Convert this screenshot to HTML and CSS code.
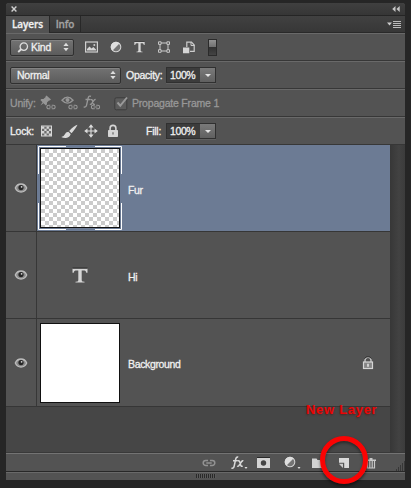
FILE: index.html
```html
<!DOCTYPE html>
<html lang="en">
<head>
<meta charset="utf-8">
<title>Layers</title>
<link rel="stylesheet" href="styles.css">
</head>
<body>
<svg class="defs" width="0" height="0" aria-hidden="true">
  <defs>
    <symbol id="eye" viewBox="0 0 14 12"><path d="M1.300 6Q3 2 7 2T12.700 6Q11 10 7 10T1.300 6Z" fill="#8a8a8a" stroke="#bcbcbc" stroke-width="1.300"/><circle cx="7" cy="5.600" r="2.600" fill="#262626"/><circle cx="7.600" cy="4.800" r=".9" fill="#d5d5d5"/></symbol>
    <symbol id="link" viewBox="0 0 14 8"><path d="M6 1.500H3.700a2.500 2.500 0 0 0 0 5H6M8 1.500h2.300a2.500 2.500 0 0 1 0 5H8M4.300 4h5.400" fill="none" stroke="currentColor" stroke-width="1.500"/></symbol>
    <symbol id="half" viewBox="0 0 12 12"><circle cx="6" cy="6" r="4.800" fill="#747474" stroke="#d2d2d2" stroke-width="1.100"/><path d="M2.300 9.700A5.200 5.200 0 0 1 9.700 2.300Z" fill="#dedede"/></symbol>
    <symbol id="tee" viewBox="0 0 16 16"><path d="M.5 1h15v4.300h-1.200Q13.800 3 12.500 3H9.700v10q0 1.200 2.800 1.200V15h-9v-.8q2.800 0 2.800-1.200V3H3.500Q2.200 3 1.700 5.300H.5Z" fill="#d6d6d6"/><path d="M.5.6h15" stroke="#222" stroke-width=".9"/></symbol>
    <symbol id="arrows" viewBox="0 0 6 10"><path d="M.4 4L3 .8 5.600 4ZM.4 6L3 9.200 5.600 6Z" fill="#ddd"/></symbol>
  </defs>
</svg>
<main class="panel">
  <header class="titlebar">
    <svg width="6" height="6" viewBox="0 0 6 6"><path d="M.6.6l4.800 4.800M5.400.6L.6 5.400" stroke="#d0d0d0" stroke-width="1.400"/></svg>
    <svg width="8" height="6" viewBox="0 0 8 6"><path d="M3.500 0v6L.2 3ZM7.700 0v6L4.400 3Z" fill="#c5c5c5"/></svg>
  </header>
  <nav class="tabs">
    <span class="tab active">Layers</span><span class="tab">Info</span>
    <svg class="menu" width="14" height="9" viewBox="0 0 14 9"><path d="M0 2.500h5L2.500 5.500Z" fill="#ccc"/><path d="M6 1.500h8M6 3.500h8M6 5.500h8M6 7.500h8" stroke="#bbb"/></svg>
  </nav>

  <section class="bar filter">
    <div class="select kind">
      <svg width="12" height="11" viewBox="0 0 12 11"><circle cx="6.800" cy="4.600" r="3.700" fill="none" stroke="#ddd" stroke-width="1.300"/><path d="M4.400 7L1.200 10" stroke="#ddd" stroke-width="1.800"/></svg>
      <span>Kind</span>
      <svg class="arrows" width="6" height="10"><use href="#arrows"/></svg>
    </div>
    <svg width="13" height="12" viewBox="0 0 13 12"><rect x=".6" y="1" width="11.800" height="10" fill="#555" stroke="#d0d0d0" stroke-width="1.200"/><path d="M2 9.500V8l2.500-2.500 2 2L8.300 6 11 8.500v1Z" fill="#d5d5d5"/><circle cx="9.300" cy="4" r="1" fill="#ccc"/></svg>
    <svg width="12" height="12"><use href="#half"/></svg>
    <svg width="11" height="12" viewBox="0 0 16 16" preserveAspectRatio="none"><use href="#tee" width="16" height="16"/></svg>
    <svg width="12" height="12" viewBox="0 0 12 12"><path d="M2 2h8v8H2Z" fill="none" stroke="#ccc"/><path d="M.5.8h2.600v2.600H.5ZM8.900.8h2.600v2.600H8.900ZM.5 8.700h2.600v2.600H.5ZM8.900 8.700h2.600v2.600H8.900Z" fill="#555" stroke="#d0d0d0" stroke-width=".9"/></svg>
    <svg width="12" height="13" viewBox="0 0 12 13"><path d="M3.800 6V1.200h4.700l2.700 2.900v6.300H7" fill="none" stroke="#ccc" stroke-width="1.200"/><path d="M8 1v3.500h3.500" fill="none" stroke="#ccc"/><path d="M0 6.500h6.300v5.800H0Z" fill="#d5d5d5"/></svg>
    <i class="toggle"></i>
  </section>

  <section class="bar blend">
    <div class="select mode"><span>Normal</span><svg class="arrows" width="6" height="10"><use href="#arrows"/></svg></div>
    <span class="lbl">Opacity:</span>
    <div class="field"><span>100%</span><b></b></div>
  </section>

  <section class="bar unify">
    <span class="lbl">Unify:</span>
    <svg width="16" height="16" viewBox="0 0 16 16"><path d="M6.500.5l4.500 4-1.200 1-.8-.1L7 7.600l-.1 2-1.100 1L3.500 8.300.4 10.400 2.500 7.200.4 5l1-1 2 .1L5.700 2l-.1-.8Z" fill="#969696"/><svg x="6" y="9" width="10" height="6"><use href="#link"/></svg></svg>
    <svg width="17" height="16" viewBox="0 0 17 16"><path d="M1 5.200Q6.500-1 12 5.200 6.500 11 1 5.200Z" fill="none" stroke="#969696" stroke-width="1.400"/><circle cx="6.500" cy="5" r="2" fill="#969696"/><svg x="7" y="9" width="10" height="6"><use href="#link"/></svg></svg>
    <svg width="18" height="16" viewBox="0 0 18 16"><path d="M8 1.300Q5.700.2 5 3.600L3.600 10Q3 12.700.7 11.900M2.500 4.500h4.700M7.500 4.700q1.500-.6 2 1l.8 3q.3 1 1.500.4M12.600 4.600q-1-.5-2 1.200L8.600 8.700q-.9 1-1.700.4" fill="none" stroke="#989898" stroke-width="1.300"/><svg x="7.500" y="9" width="10" height="6"><use href="#link"/></svg></svg>
    <svg width="15" height="15" viewBox="0 0 15 15"><rect x=".8" y="1.800" width="12" height="12" rx="1.500" fill="#5c5c5c" stroke="#3d3d3d"/><path d="M3.500 6.500l2.800 3.200L13 1.500" fill="none" stroke="#999" stroke-width="1.900"/></svg>
    <span class="lbl">Propagate Frame 1</span>
  </section>

  <section class="bar lock">
    <span class="lbl">Lock:</span>
    <svg width="11" height="12" viewBox="0 0 11 12"><rect x=".5" y="1" width="10" height="10" fill="#6c6c6c" stroke="#d8d8d8"/><path d="M1 1.500h2.300v2.300H1ZM5.600 1.500h2.300v2.300H5.600ZM3.300 3.800h2.300v2.300H3.300ZM7.900 3.800h2.300v2.300H7.900ZM1 6.100h2.300v2.300H1ZM5.600 6.100h2.300v2.300H5.600ZM3.300 8.400h2.300v2.300H3.300ZM7.900 8.400h2.300v2.300H7.900Z" fill="#d6d6d6"/></svg>
    <svg width="17" height="15" viewBox="0 0 17 15"><path d="M16.500.8Q13 1.800 8.200 7l2.400 2.300Q15 4 16.500.8ZM7.300 7.800l2.400 2.300Q8.800 13.700 5 13.900 2 14 .3 12.900q2.800-.2 3.600-2.600.7-2.200 3.400-2.500Z" fill="#dadada"/></svg>
    <svg width="14" height="14" viewBox="0 0 14 14"><path d="M7 2v10M2 7h10" stroke="#ddd" stroke-width="1.100"/><path d="M7 .2l2.600 3.300H4.400ZM7 13.800l2.600-3.300H4.400ZM.2 7l3.300-2.600v5.200ZM13.800 7l-3.300-2.600v5.200Z" fill="#ddd"/></svg>
    <svg width="12" height="14" viewBox="0 0 12 14"><path d="M3.100 7V4.300a2.900 2.900 0 0 1 5.800 0V7" fill="none" stroke="#d5d5d5" stroke-width="1.600"/><rect x="1" y="6" width="10" height="7" rx=".8" fill="#d6d6d6"/><path d="M5.400 8.200h1.200v2.300H5.400Z" fill="#666"/></svg>
    <span class="lbl">Fill:</span>
    <div class="field"><span>100%</span><b></b></div>
  </section>

  <section class="body">
    <div class="list">
      <div class="layer selected">
        <div class="vis"><svg width="14" height="12"><use href="#eye"/></svg></div>
        <div class="thumbcell"><svg width="84" height="84" viewBox="0 0 84 84"><defs><pattern id="chk" x="3" y="3" width="8" height="8" patternUnits="userSpaceOnUse"><path d="M0 0h8v8H0Z" fill="#fff"/><path d="M4 0h4v4H4ZM0 4h4v4H0Z" fill="#cbcbcb"/></pattern></defs><path d="M28 .5H.5V28M57 .5h26.500V28M.5 57v26.500H28M83.500 57v26.500H57" fill="none" stroke="#fff"/><rect x="2.500" y="2.500" width="79" height="79" fill="url(#chk)" stroke="#111"/></svg></div>
        <span class="name">Fur</span>
      </div>
      <div class="layer">
        <div class="vis"><svg width="14" height="12"><use href="#eye"/></svg></div>
        <div class="thumbcell type"><svg width="16" height="17"><use href="#tee"/></svg></div>
        <span class="name">Hi</span>
      </div>
      <div class="layer last">
        <div class="vis"><svg width="14" height="12"><use href="#eye"/></svg></div>
        <div class="thumbcell"><i class="white"></i></div>
        <span class="name">Background</span>
        <svg class="locked" width="12" height="14" viewBox="0 0 12 14"><path d="M3 7V4.300a3 3 0 0 1 6 0V7" fill="none" stroke="#cfcfcf" stroke-width="1.300"/><path d="M2.500 2.500Q6-1 9.500 2.500" fill="none" stroke="#222"/><rect x="1.500" y="6" width="9" height="6.500" fill="#858585" stroke="#d5d5d5" stroke-width="1.200"/><path d="M5.300 7.800h1.400v3H5.300Z" fill="#eee"/></svg>
      </div>
    </div>
    <div class="scroll"></div>
  </section>

  <footer class="tools">
    <svg class="dim" width="14" height="8"><use href="#link"/></svg>
    <svg width="17" height="14" viewBox="0 0 17 14"><path d="M7.200 1.200Q5.300.3 4.600 3.500L3.200 10Q2.600 12.900.5 12M2 4.800h4.600M6.800 5q1.500-.7 2 1l1 3.600q.4 1.200 1.800.3M12.300 5q-1-.6-2 1.200L8 9.500q-.9 1.200-1.900.5" fill="none" stroke="#d9d9d9" stroke-width="1.500"/><path d="M13.500 11h3L15 13Z" fill="#ddd"/></svg>
    <svg width="13" height="12" viewBox="0 0 13 12"><path d="M0 1h13v10H0Z" fill="#d4d4d4"/><path d="M0 .5h13" stroke="#292929"/><circle cx="6.500" cy="6" r="2.700" fill="#454545"/></svg>
    <svg width="17" height="14" viewBox="0 0 17 14"><use href="#half" width="12" height="12"/><path d="M13.500 11h3L15 13Z" fill="#ddd"/></svg>
    <svg width="13" height="12" viewBox="0 0 13 12"><path d="M1 1.500h4.500l1 1.500H12v8H1Z" fill="#d2d2d2"/></svg>
    <svg width="12" height="12" viewBox="0 0 12 12"><path d="M1 1h10v10H6.200V5.800H1Z" fill="#dadada"/><path d="M.8 6.800H5V11Z" fill="#ccc"/></svg>
    <svg width="10" height="12" viewBox="0 0 10 12"><path d="M3.500 1h3v1.500H10V4H0V2.500h3.500Z" fill="#c9c9c9"/><path d="M1.500 4v7h7V4M3.800 4v7M6.200 4v7" fill="none" stroke="#c9c9c9" stroke-width="1.200"/></svg>
    <svg class="sizer" width="10" height="10" viewBox="0 0 10 10"><path d="M8 1h1M6 3h1M8 3h1M4 5h1M6 5h1M8 5h1M2 7h1M4 7h1M6 7h1M8 7h1M0 9h1M2 9h1M4 9h1M6 9h1M8 9h1" stroke="#1d1d1d"/></svg>
  </footer>
  <div class="grip"><i></i></div>
</main>
<div class="callout">New Layer</div>
<div class="ring"></div>
</body>
</html>
```
FILE: styles.css
```css
* { box-sizing: border-box; }
body {
  margin: 0;
  width: 411px;
  height: 488px;
  overflow: hidden;
  position: relative;
  padding: 3px 6px 8px;
  background: #262626;
  color: #f0f0f0;
  font: 10.5px/14px "Liberation Sans", Arial, sans-serif;
  letter-spacing: -0.25px;
  -webkit-text-stroke: 0.3px currentColor;
  white-space: nowrap;
}
svg { display: block; flex: none; }
.defs { position: absolute; }
.panel {
  width: 399px;
  height: 477px;
  display: flex;
  flex-direction: column;
  background: #535353;
  border-radius: 3px 3px 0 0;
  overflow: hidden;
}
.titlebar {
  height: 13px;
  flex: none;
  display: flex;
  justify-content: space-between;
  align-items: center;
  padding: 0 5px;
  background: linear-gradient(#404040, #363636);
  border-bottom: 1px solid #252525;
}
.tabs {
  height: 17px;
  flex: none;
  display: flex;
  background: linear-gradient(#414141, #373737);
  border-bottom: 1px solid #292929;
  font: 600 10px/17px "Open Sans", sans-serif;
  letter-spacing: -0.1px;
}
.tab {
  width: 31px;
  text-align: center;
  color: #a2a2a2;
  border-right: 1px solid #282828;
}
.tab.active {
  width: 44px;
  height: 17px;
  color: #f0f0f0;
  background: #535353;
}
.menu { margin: 4px 4px 0 auto; }
.bar {
  height: 28px;
  flex: none;
  display: grid;
  align-items: center;
  border-top: 1px solid #696969;
  border-bottom: 1px solid #373737;
  padding-left: 4px;
}
.filter { grid-template-columns: 75px 25px 24px 24px 25px 25px 13px; }
.blend { grid-template-columns: 116px 40px 52px; }
.unify {
  grid-template-columns: 30px 21px 22px 31px 18px 100px;
  color: #989898;
}
.unify .lbl { letter-spacing: -0.2px; }
.lock { grid-template-columns: 31px 20px 23px 23px 39px 20px 52px; }
.select {
  height: 17px;
  display: flex;
  align-items: center;
  border: 1px solid #303030;
  border-radius: 2px;
  background: linear-gradient(#727272, #5c5c5c);
  box-shadow: inset 0 1px #838383, 0 1px #606060;
  padding: 0 4px 0 6px;
}
.kind { width: 64px; gap: 2px; }
.mode { width: 111px; }
.arrows { margin-left: auto; }
.toggle {
  width: 9px;
  height: 17px;
  border: 1px solid #2b2b2b;
  background: linear-gradient(#929292, #707070 47%, #303030 47%, #444);
}
.field {
  width: 50px;
  height: 16px;
  display: flex;
  border: 1px solid #303030;
  background: #3c3c3c;
  box-shadow: 0 1px #606060;
}
.field span { width: 33px; padding-left: 3px; letter-spacing: -0.4px; }
.field b {
  flex: 1;
  display: grid;
  place-items: center;
  background: linear-gradient(#7a7a7a, #606060);
}
.field b::after {
  content: "";
  border: 3px solid transparent;
  border-top: 3px solid #e5e5e5;
  border-bottom: 0;
}
.body {
  height: 308px;
  flex: none;
  display: flex;
  background: #464646;
  border-bottom: 1px solid #393939;
}
.list { flex: 1; }
.scroll {
  width: 15px;
  background: linear-gradient(90deg, #373737, #424242 60%, #3c3c3c);
}
.layer {
  height: 87px;
  display: flex;
  align-items: center;
  border-bottom: 1px solid #363636;
  background: #535353;
}
.layer.last { height: 88px; }
.vis {
  width: 31px;
  height: 100%;
  display: grid;
  place-items: center;
  border-right: 1px solid #373737;
  background: #535353;
}
.thumbcell {
  width: 91px;
  height: 86px;
  display: grid;
  place-items: center start;
  padding-left: 1px;
}
.layer.selected { background: #6c7b94; }
.type { padding-left: 35px; }
.white {
  width: 80px;
  height: 80px;
  margin-left: 2px;
  border: 1px solid #111;
  background: #fff;
}
.name { padding-top: 3px; letter-spacing: -0.35px; }
.locked { margin: 0 16px 0 auto; }
.tools {
  height: 19px;
  flex: none;
  display: grid;
  grid-template-columns: 29px 26px 27px 27px 27px 28px 30px 10px;
  align-items: center;
  padding-left: 196px;
  border-top: 1px solid #737373;
  border-bottom: 1px solid #282828;
}
.dim { color: #929292; }
.sizer { align-self: end; }
.grip {
  flex: 1;
  display: flex;
  justify-content: center;
  border-top: 1px solid #696969;
}
.grip i {
  width: 20px;
  height: 4px;
  margin-top: 1px;
  background: repeating-linear-gradient(90deg, #292929 0 1px, #5a5a5a 1px 2px);
}
.callout {
  position: absolute;
  left: 306px;
  top: 402px;
  color: #ea0606;
  font: bold 13px/16px "Liberation Sans", Arial, sans-serif;
  letter-spacing: 0.7px;
  -webkit-text-stroke: 0;
  text-shadow: 0 1px 2px #5008;
}
.ring {
  position: absolute;
  left: 320px;
  top: 436px;
  width: 48px;
  height: 48px;
  border: 5px solid #fb0303;
  border-radius: 50%;
  box-shadow: 0 2px 3px #0008, inset 0 2px 3px #0006;
}
```
